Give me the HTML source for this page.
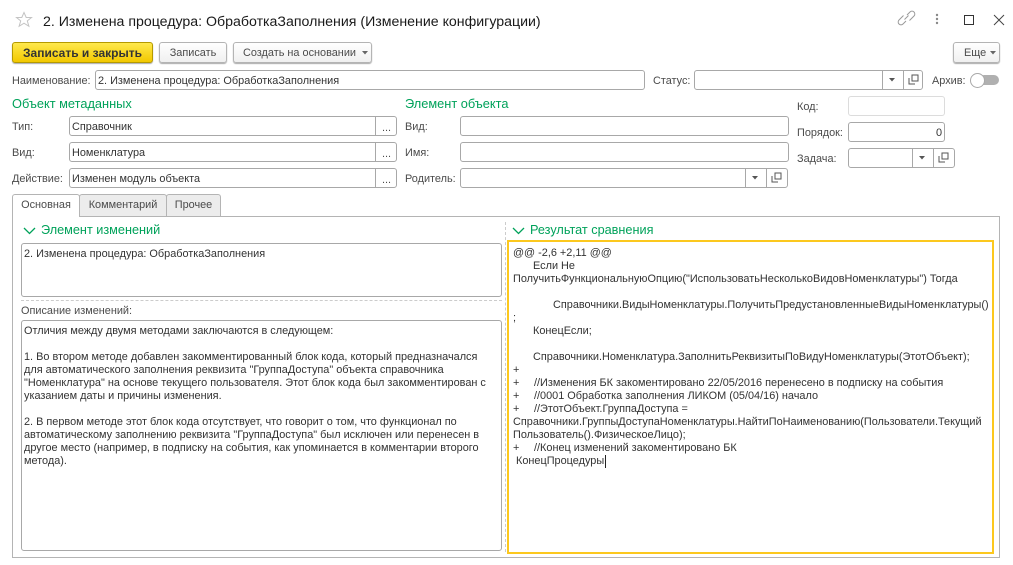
<!DOCTYPE html>
<html lang="ru"><head><meta charset="utf-8"><title>Изменение конфигурации</title>
<style>
html,body{margin:0;padding:0;background:#fff}
#r{position:relative;width:1013px;height:565px;overflow:hidden;background:#fff;font-family:"Liberation Sans",sans-serif;font-size:10.9px;color:#4b4b4b}
#r div{position:absolute;white-space:nowrap;box-sizing:border-box}
.t{line-height:14px;height:14px}
.f{border:1px solid #a8a8a8;border-radius:3px;background:#fff}
.v{color:#333}
.d{width:1px;top:0;bottom:0;background:#a8a8a8}
.b{border:1px solid #b4b4b4;border-radius:3px;background:linear-gradient(#fff,#f0f0f0);box-shadow:0 1px 1px #aaa;text-align:center;line-height:20px;height:21px;color:#4b4b4b}
.g{color:#00a25a;font-size:12.8px;line-height:16px;height:16px}
.c{color:#333}
.tab{height:23px;border:1px solid #b4b4b4;border-bottom:0;border-radius:3px 3px 0 0;background:#ececec;text-align:center;line-height:21px}
</style></head><body><div id="r">
<svg style="position:absolute;left:15px;top:11px" width="18" height="17" viewBox="0 0 18 17"><path d="M9 1.500l2.200 5h5.300l-4.200 3.400 1.600 5.400L9 12.200l-4.900 3.100 1.600-5.400L1.500 6.500h5.300z" fill="none" stroke="#c4c4c4"/></svg>
<div style="left:43px;top:13px;font-size:14.17px;line-height:18px;color:#1a1a1a">2. Изменена процедура: ОбработкаЗаполнения (Изменение конфигурации)</div>
<svg style="position:absolute;left:897px;top:9px" width="19" height="18" viewBox="0 0 19 18"><g fill="none" stroke="#9a9a9a" stroke-width="1"><path d="M10 6l3-3a2.800 2.800 0 0 1 4 4l-4.500 4.500"/><path d="M9 12l-3 3a2.800 2.800 0 0 1-4-4l4.500-4.500"/><path d="M7.500 10.500l4-4"/></g></svg>
<svg style="position:absolute;left:934px;top:13px" width="6" height="13"><circle cx="3" cy="2" r="1.200" fill="#888"/><circle cx="3" cy="6" r="1.200" fill="#888"/><circle cx="3" cy="10" r="1.200" fill="#888"/></svg>
<div style="left:964px;top:15px;width:10px;height:10px;border:1.500px solid #333"></div>
<svg style="position:absolute;left:993px;top:14px" width="12" height="12"><path d="M1 1l10 10M11 1L1 11" stroke="#444" fill="none"/></svg>

<div class="b" style="left:12px;top:42px;width:141px;border-color:#b59a00;background:linear-gradient(#ffe94d,#f2c800);color:#333;font-weight:bold;font-size:12px">Записать и закрыть</div>
<div class="b" style="left:159px;top:42px;width:68px">Записать</div>
<div class="b" style="left:233px;top:42px;width:139px;text-align:left;padding-left:9px">Создать на основании</div>
<svg style="position:absolute;left:362px;top:51px" width="6" height="4"><path d="M0 0h6L3 3.500z" fill="#666"/></svg>
<div class="b" style="left:953px;top:42px;width:47px;text-align:left;padding-left:10px">Еще</div>
<svg style="position:absolute;left:990px;top:51px" width="6" height="4"><path d="M0 0h6L3 3.500z" fill="#666"/></svg>

<div class="t" style="left:12px;top:74px">Наименование:</div>
<div class="f" style="left:95px;top:70px;width:550px;height:20px"></div>
<div class="t v" style="left:98px;top:74px">2. Изменена процедура: ОбработкаЗаполнения</div>
<div class="t" style="left:653px;top:74px">Статус:</div>
<div class="f" style="left:694px;top:70px;width:229px;height:20px"><div class="d" style="left:187px"></div><div class="d" style="left:208px"></div>
<svg style="position:absolute;left:194px;top:7px" width="6" height="4"><path d="M0 0h6L3 3.500z" fill="#555"/></svg>
<svg style="position:absolute;left:213px;top:3px" width="11" height="11"><path d="M1 4v6h6M4 1h6v6H4z" fill="none" stroke="#555"/></svg></div>
<div class="t" style="left:932px;top:74px">Архив:</div>
<div style="left:979px;top:75px;width:20px;height:10px;border-radius:5px;background:#b0b0b0"></div>
<div style="left:970px;top:73px;width:15px;height:15px;border-radius:50%;background:#fff;border:1px solid #a8a8a8"></div>

<div class="g" style="left:12px;top:96px">Объект метаданных</div>
<div class="g" style="left:405px;top:96px">Элемент объекта</div>

<div class="t" style="left:12px;top:120px">Тип:</div>
<div class="f" style="left:69px;top:116px;width:328px;height:20px"><div class="d" style="left:305px"></div><div class="t" style="left:312px;top:4px">...</div></div>
<div class="t v" style="left:72px;top:120px">Справочник</div>
<div class="t" style="left:12px;top:146px">Вид:</div>
<div class="f" style="left:69px;top:142px;width:328px;height:20px"><div class="d" style="left:305px"></div><div class="t" style="left:312px;top:4px">...</div></div>
<div class="t v" style="left:72px;top:146px">Номенклатура</div>
<div class="t" style="left:12px;top:172px">Действие:</div>
<div class="f" style="left:69px;top:168px;width:328px;height:20px"><div class="d" style="left:305px"></div><div class="t" style="left:312px;top:4px">...</div></div>
<div class="t v" style="left:72px;top:172px">Изменен модуль объекта</div>

<div class="t" style="left:405px;top:120px">Вид:</div>
<div class="f" style="left:460px;top:116px;width:329px;height:20px"></div>
<div class="t" style="left:405px;top:146px">Имя:</div>
<div class="f" style="left:460px;top:142px;width:329px;height:20px"></div>
<div class="t" style="left:405px;top:172px">Родитель:</div>
<div class="f" style="left:460px;top:168px;width:328px;height:20px"><div class="d" style="left:284px"></div><div class="d" style="left:305px"></div>
<svg style="position:absolute;left:291px;top:7px" width="6" height="4"><path d="M0 0h6L3 3.500z" fill="#555"/></svg>
<svg style="position:absolute;left:310px;top:3px" width="11" height="11"><path d="M1 4v6h6M4 1h6v6H4z" fill="none" stroke="#555"/></svg></div>

<div class="t" style="left:797px;top:100px">Код:</div>
<div class="f" style="left:848px;top:96px;width:97px;height:20px;border-color:#dcdcdc"></div>
<div class="t" style="left:797px;top:126px">Порядок:</div>
<div class="f" style="left:848px;top:122px;width:97px;height:20px"></div>
<div class="t v" style="left:936px;top:126px">0</div>
<div class="t" style="left:797px;top:152px">Задача:</div>
<div class="f" style="left:848px;top:148px;width:107px;height:20px"><div class="d" style="left:63px"></div><div class="d" style="left:84px"></div>
<svg style="position:absolute;left:70px;top:7px" width="6" height="4"><path d="M0 0h6L3 3.500z" fill="#555"/></svg>
<svg style="position:absolute;left:89px;top:3px" width="11" height="11"><path d="M1 4v6h6M4 1h6v6H4z" fill="none" stroke="#555"/></svg></div>

<div style="left:12px;top:216px;width:988px;height:342px;border:1px solid #b4b4b4"></div>
<div class="tab" style="left:12px;top:194px;width:68px;background:#fff;height:23px;z-index:2">Основная</div>
<div class="tab" style="left:79px;top:194px;width:88px;height:22px">Комментарий</div>
<div class="tab" style="left:166px;top:194px;width:55px;height:22px">Прочее</div>

<svg style="position:absolute;left:23px;top:227px" width="13" height="8"><path d="M1 1l5.500 5.500L12 1" fill="none" stroke="#00a25a" stroke-width="1.300"/></svg>
<div class="g" style="left:41px;top:222px;font-size:12.7px">Элемент изменений</div>
<svg style="position:absolute;left:512px;top:227px" width="13" height="8"><path d="M1 1l5.500 5.500L12 1" fill="none" stroke="#00a25a" stroke-width="1.300"/></svg>
<div class="g" style="left:530px;top:222px;font-size:12.7px">Результат сравнения</div>

<div class="f" style="left:21px;top:243px;width:481px;height:54px"></div>
<div class="t c" style="left:24px;top:247px">2. Изменена процедура: ОбработкаЗаполнения</div>
<div style="left:21px;top:300px;width:481px;height:0;border-top:1px dashed #ccc"></div>
<div class="t" style="left:21px;top:304px">Описание изменений:</div>
<div class="f" style="left:21px;top:320px;width:481px;height:231px"></div>
<div style="left:505px;top:222px;width:0;height:330px;border-left:1px dashed #ccc"></div>

<div class="t c" style="left:24px;top:324px">Отличия между двумя методами заключаются в следующем:</div>
<div class="t c" style="left:24px;top:350px">1. Во втором методе добавлен закомментированный блок кода, который предназначался</div>
<div class="t c" style="left:24px;top:363px">для автоматического заполнения реквизита "ГруппаДоступа" объекта справочника</div>
<div class="t c" style="left:24px;top:376px">"Номенклатура" на основе текущего пользователя. Этот блок кода был закомментирован с</div>
<div class="t c" style="left:24px;top:389px">указанием даты и причины изменения.</div>
<div class="t c" style="left:24px;top:415px">2. В первом методе этот блок кода отсутствует, что говорит о том, что функционал по</div>
<div class="t c" style="left:24px;top:428px">автоматическому заполнению реквизита "ГруппаДоступа" был исключен или перенесен в</div>
<div class="t c" style="left:24px;top:441px">другое место (например, в подписку на события, как упоминается в комментарии второго</div>
<div class="t c" style="left:24px;top:454px">метода).</div>

<div style="left:507px;top:240px;width:487px;height:314px;border:2.500px solid #fcc81e"></div>
<div class="t c" style="left:513px;top:246px">@@ -2,6 +2,11 @@</div>
<div class="t c" style="left:533px;top:259px">Если Не</div>
<div class="t c" style="left:513px;top:272px">ПолучитьФункциональнуюОпцию("ИспользоватьНесколькоВидовНоменклатуры") Тогда</div>
<div class="t c" style="left:553px;top:298px">Справочники.ВидыНоменклатуры.ПолучитьПредустановленныеВидыНоменклатуры()</div>
<div class="t c" style="left:513px;top:311px">;</div>
<div class="t c" style="left:533px;top:324px">КонецЕсли;</div>
<div class="t c" style="left:533px;top:350px">Справочники.Номенклатура.ЗаполнитьРеквизитыПоВидуНоменклатуры(ЭтотОбъект);</div>
<div class="t c" style="left:513px;top:363px">+</div>
<div class="t c" style="left:513px;top:376px">+</div><div class="t c" style="left:534px;top:376px">//Изменения БК закоментировано 22/05/2016 перенесено в подписку на события</div>
<div class="t c" style="left:513px;top:389px">+</div><div class="t c" style="left:534px;top:389px">//0001 Обработка заполнения ЛИКОМ (05/04/16) начало</div>
<div class="t c" style="left:513px;top:402px">+</div><div class="t c" style="left:534px;top:402px">//ЭтотОбъект.ГруппаДоступа =</div>
<div class="t c" style="left:513px;top:415px">Справочники.ГруппыДоступаНоменклатуры.НайтиПоНаименованию(Пользователи.Текущий</div>
<div class="t c" style="left:513px;top:428px">Пользователь().ФизическоеЛицо);</div>
<div class="t c" style="left:513px;top:441px">+</div><div class="t c" style="left:534px;top:441px">//Конец изменений закоментировано БК</div>
<div class="t c" style="left:516px;top:454px">КонецПроцедуры</div>
<div style="left:605px;top:455px;width:1px;height:13px;background:#222"></div>
</div></body></html>
